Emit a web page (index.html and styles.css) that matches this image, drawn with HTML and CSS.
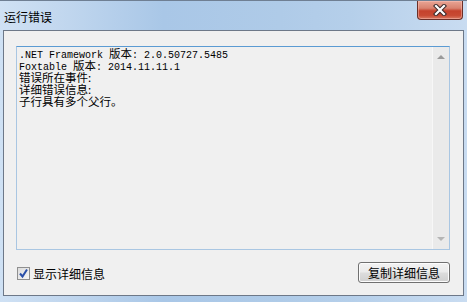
FILE: index.html
```html
<!DOCTYPE html>
<html>
<head>
<meta charset="utf-8">
<link rel="stylesheet" href="styles.css">
</head>
<body>
<div class="window">
  <div class="titlebar">
    <span class="title">运行错误</span>
    <div class="close">
      <svg width="20" height="12" viewBox="0 0 20 12">
        <path d="M6 2 L14 10 M14 2 L6 10" stroke="#3a2a2a" stroke-width="4.2" stroke-linecap="square" fill="none"/>
        <path d="M6 2 L14 10 M14 2 L6 10" stroke="#ffffff" stroke-width="2.2" stroke-linecap="square" fill="none"/>
      </svg>
    </div>
  </div>
  <div class="client">
    <div class="textbox">
      <div class="text">
        <div class="line">.NET Framework <span class="cjk">版本</span>: 2.0.50727.5485</div>
        <div class="line">Foxtable <span class="cjk">版本</span>: 2014.11.11.1</div>
        <div class="line"><span class="cjk">错误所在事件:</span></div>
        <div class="line"><span class="cjk">详细错误信息:</span></div>
        <div class="line"><span class="cjk">子行具有多个父行。</span></div>
      </div>
      <div class="scrollbar">
        <div class="arrow up"></div>
        <div class="arrow down"></div>
      </div>
    </div>
    <div class="bottom">
      <label class="check">
        <span class="box">
          <svg width="11" height="11" viewBox="0 0 11 11">
            <path d="M2 5.5 L4.5 8.5 L9 1.5" stroke="#2a4fa8" stroke-width="2" fill="none"/>
          </svg>
        </span>
        <span class="label">显示详细信息</span>
      </label>
      <div class="button">复制详细信息</div>
    </div>
  </div>
</div>
</body>
</html>
```

FILE: styles.css
```css
html, body {
  margin: 0;
  padding: 0;
}
body {
  width: 467px;
  height: 302px;
  overflow: hidden;
  font-family: "Noto Sans CJK SC", "Liberation Sans", sans-serif;
}
.window {
  width: 467px;
  height: 302px;
  box-sizing: border-box;
  background: linear-gradient(90deg, #cfe1f4 0%, #c3d8ef 12%, #a9c7e7 35%, #afcbe8 60%, #b5cfea 75%, #c9dcf1 100%);
  border-top: 1px solid #6f7f93;
  display: flex;
  flex-direction: column;
}
.titlebar {
  height: 29px;
  display: flex;
  justify-content: space-between;
  align-items: flex-start;
  padding-left: 4px;
  padding-right: 4px;
}
.title {
  font-size: 12px;
  line-height: 14px;
  margin-top: 9px;
  color: #000;
}
.close {
  width: 44px;
  height: 18px;
  border: 1px solid #6b2f28;
  border-top: none;
  border-radius: 0 0 4px 4px;
  background: linear-gradient(180deg, #e9a595 0%, #d9826f 40%, #c5422c 55%, #c84a33 80%, #d97a62 100%);
  display: flex;
  align-items: center;
  justify-content: center;
  box-shadow: inset 0 0 0 1px rgba(255,200,190,0.45);
}
.close svg {
  display: block;
}
.client {
  margin: 0 3px;
  height: 266px;
  box-sizing: border-box;
  border: 1px solid #6d7888;
  background: #f0f0f0;
  padding: 15px 13px 0 12px;
  display: flex;
  flex-direction: column;
}
.textbox {
  height: 204px;
  box-sizing: border-box;
  border: 1px solid #a9c6e2;
  border-top-color: #5b9bd3;
  background: #f0f0f0;
  display: flex;
}
.text {
  flex: 1;
  padding: 1px 0 0 2px;
  font-family: "Liberation Mono", monospace;
  font-size: 10px;
  color: #000;
}
.line {
  height: 12px;
  line-height: 12px;
  white-space: pre;
}
.cjk {
  font-family: "Noto Sans CJK SC", sans-serif;
  font-size: 11.5px;
  line-height: 1;
}
.scrollbar {
  width: 17px;
  background: #eaeaea;
  border-left: 1px solid #f7f7f7;
  display: flex;
  flex-direction: column;
  justify-content: space-between;
  padding: 8px 0 8px;
  box-sizing: border-box;
  align-items: center;
}
.arrow {
  width: 0;
  height: 0;
  border-left: 4px solid transparent;
  border-right: 4px solid transparent;
}
.arrow.up {
  border-bottom: 4px solid #9a9a9a;
}
.arrow.down {
  border-top: 4px solid #b5b5b5;
}
.bottom {
  display: flex;
  justify-content: space-between;
  align-items: center;
  margin-top: 12px;
  padding-left: 1px;
}
.check {
  display: flex;
  align-items: center;
  gap: 3px;
  margin-top: 2px;
}
.box {
  width: 11px;
  height: 11px;
  border: 1px solid #8f8f8f;
  background: linear-gradient(135deg, #dcdcdc, #f6f6f6);
  display: flex;
}
.label {
  font-size: 12px;
  line-height: 14px;
  color: #000;
}
.button {
  width: 90px;
  height: 19px;
  border: 1px solid #707070;
  border-radius: 3px;
  background: linear-gradient(180deg, #f2f2f2 0%, #ebebeb 48%, #dddddd 52%, #cfcfcf 100%);
  box-shadow: inset 0 0 0 1px #fcfcfc;
  font-size: 12px;
  line-height: 19px;
  text-align: center;
  color: #000;
}
```
